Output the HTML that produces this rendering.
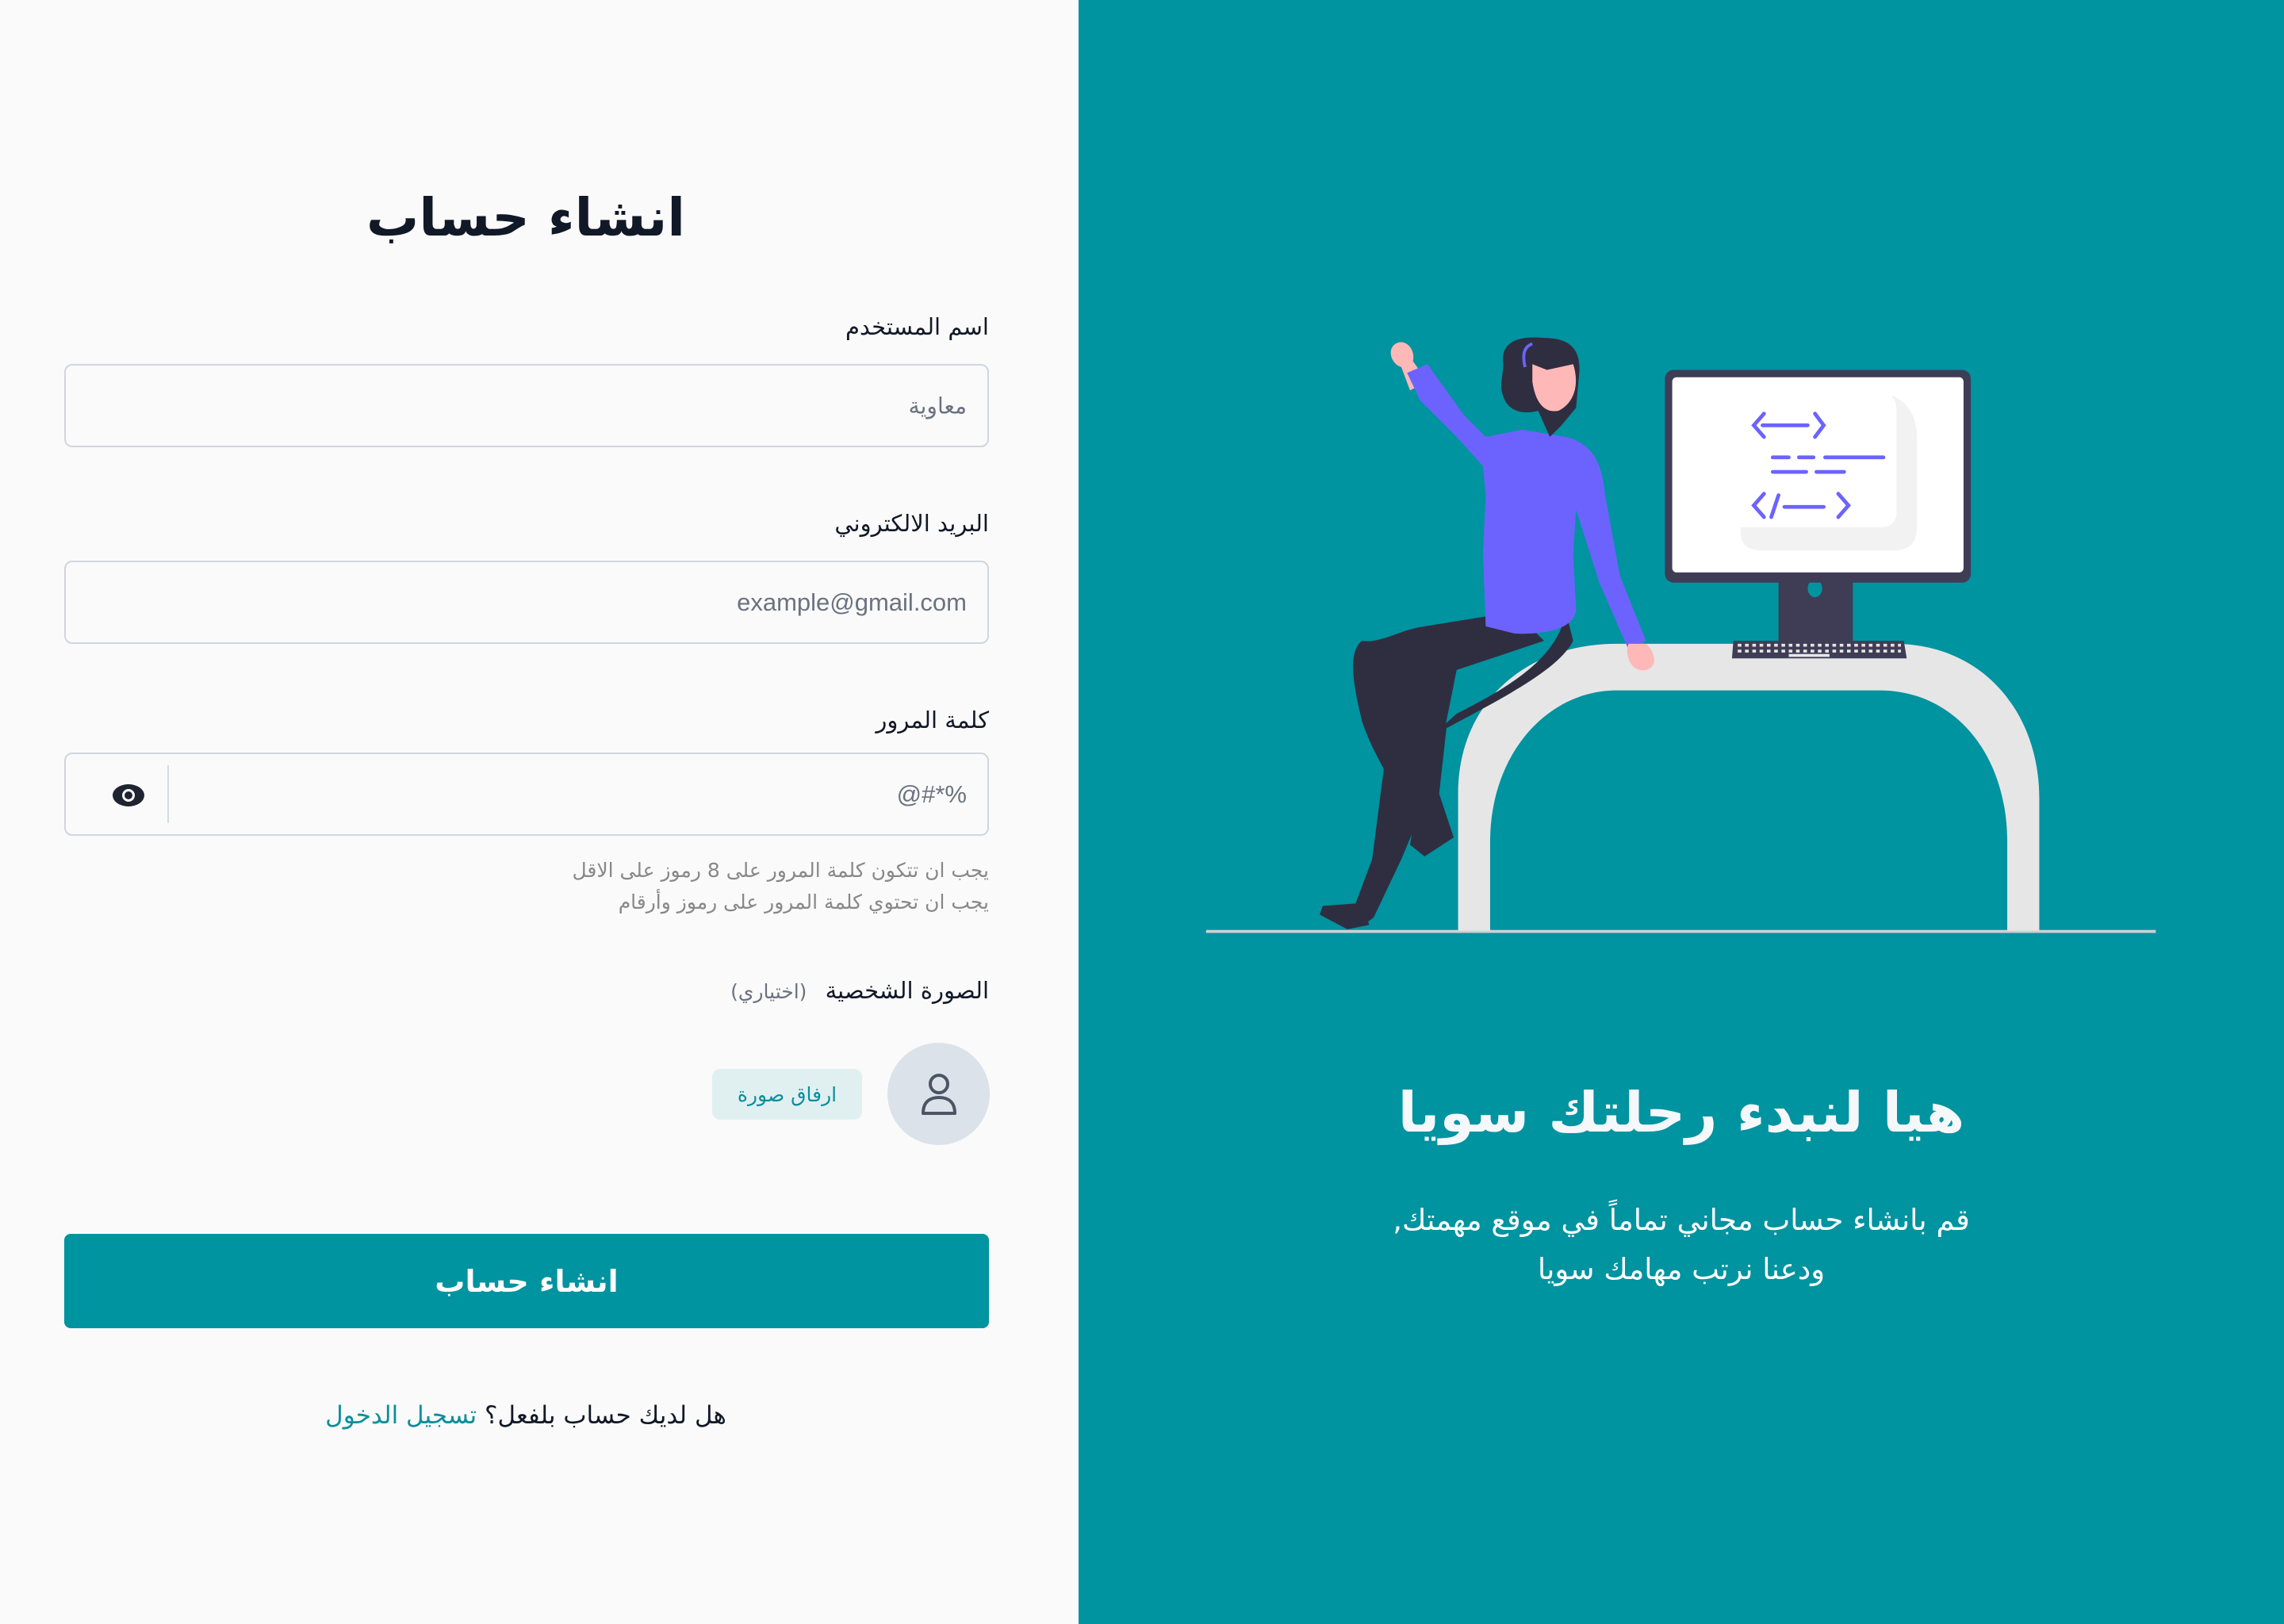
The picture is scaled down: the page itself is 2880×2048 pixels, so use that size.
<!DOCTYPE html>
<html><head><meta charset="utf-8"><style>
*{margin:0;padding:0;box-sizing:border-box}
body{width:2880px;height:2048px;position:relative;overflow:hidden;background:#fafafa;font-family:"DejaVu Sans","Liberation Sans",sans-serif}
.abs{position:absolute}
.left{left:0;top:0;width:1360px;height:2048px;background:#fafafa}
.right{left:1360px;top:0;width:1520px;height:2048px;background:#0093a0}
.r{direction:rtl;text-align:right;white-space:nowrap}
.lbl{right:1633px;font-size:29px;color:#111827}
.inp{left:81px;width:1166px;height:105px;border:2px solid #d1d5e0;border-radius:10px;background:#fafafa}
.ph{position:absolute;right:26px;top:50%;transform:translateY(-50%);font-size:31px;color:#6b7280;font-family:"Liberation Sans","DejaVu Sans",sans-serif}
</style></head><body>
<div class="abs left"></div>
<div class="abs right"></div>

<div class="abs" style="left:0;width:1326px;top:236px;text-align:center;font-size:66px;font-weight:bold;color:#111827;direction:rtl">انشاء حساب</div>

<div class="abs r lbl" style="top:395px">اسم المستخدم</div>
<div class="abs inp" style="top:459px"><span class="ph" style="font-family:'DejaVu Sans',sans-serif;font-size:28px">معاوية</span></div>

<div class="abs r lbl" style="top:643px">البريد الالكتروني</div>
<div class="abs inp" style="top:707px"><span class="ph">example@gmail.com</span></div>

<div class="abs r lbl" style="top:891px">كلمة المرور</div>
<div class="abs inp" style="top:949px"><span class="ph">@#*%</span>
<div style="position:absolute;left:128px;top:14px;width:2px;height:73px;background:#d6dae3"></div>
<svg style="position:absolute;left:58px;top:37px" width="42" height="30" viewBox="0 0 42 30"><ellipse cx="21" cy="15" rx="20" ry="14" fill="#1f2430"/><circle cx="21" cy="15" r="8" fill="#fff"/><circle cx="21" cy="15" r="5" fill="#1f2430"/></svg>
</div>

<div class="abs r" style="right:1633px;top:1078px;font-size:25px;color:#888;line-height:40px">يجب ان تتكون كلمة المرور على 8 رموز على الاقل<br>يجب ان تحتوي كلمة المرور على رموز وأرقام</div>

<div class="abs r" style="right:1633px;top:1232px;font-size:29px;color:#111827">الصورة الشخصية <span style="font-size:25px;color:#6b7280;margin-right:14px">(اختياري)</span></div>

<div class="abs" style="left:1119px;top:1315px;width:129px;height:129px;border-radius:50%;background:#dce2ea"></div>
<svg class="abs" style="left:1158px;top:1352px" width="52" height="56" viewBox="0 0 52 56"><circle cx="26" cy="15" r="11" fill="none" stroke="#4b5563" stroke-width="4"/><path d="M6 52 C6 38 14 32 26 32 C38 32 46 38 46 52 Z" fill="none" stroke="#4b5563" stroke-width="4" stroke-linejoin="round"/></svg>
<div class="abs" style="left:898px;top:1348px;width:189px;height:64px;border-radius:10px;background:#e0f0f1;color:#0a8f9b;font-size:25px;text-align:center;line-height:66px;direction:rtl">ارفاق صورة</div>

<div class="abs" style="left:81px;top:1556px;width:1166px;height:119px;border-radius:8px;background:#0093a0;color:#fff;font-size:38px;font-weight:bold;text-align:center;line-height:121px;direction:rtl">انشاء حساب</div>

<div class="abs" style="left:0;width:1326px;top:1767px;text-align:center;font-size:31px;color:#111827;direction:rtl">هل لديك حساب بلفعل؟ <span style="color:#0a8f9b">تسجيل الدخول</span></div>

<div class="abs" style="left:1360px;width:1520px;top:1362px;text-align:center;font-size:70px;font-weight:bold;color:#f5f8fb;direction:rtl">هيا لنبدء رحلتك سويا</div>
<div class="abs" style="left:1360px;width:1520px;top:1508px;text-align:center;font-size:37px;line-height:62px;color:#fff;direction:rtl">قم بانشاء حساب مجاني تماماً في موقع مهمتك,<br>ودعنا نرتب مهامك سويا</div>

<svg class="abs" style="left:0;top:0" width="2880" height="2048" viewBox="0 0 1568 1115">
<line x1="828" y1="639.5" x2="1480" y2="639.5" stroke="#d0d0d0" stroke-width="2"/>
<path d="M1001,639 L1001,545 C1001,482 1048,442 1110,442 L1300,442 C1362,442 1400,490 1400,548 L1400,639 L1378,639 L1378,578 C1378,518 1342,474 1290,474 L1110,474 C1062,474 1023,518 1023,578 L1023,639 Z" fill="#e6e6e6"/>
<rect x="1221" y="398" width="51" height="46" fill="#3f3d56"/>
<ellipse cx="1246" cy="404" rx="5" ry="6" fill="#0093a0"/>
<rect x="1143" y="254" width="210" height="146" rx="6" fill="#3f3d56"/>
<rect x="1148" y="259" width="200" height="134" rx="3" fill="#fff"/>
<path d="M1197,272 L1300,272 Q1316,280 1316,300 L1316,362 Q1316,378 1300,378 L1210,378 Q1196,378 1195,367 Z" fill="#f2f2f2"/>
<path d="M1195,270 L1292,270 Q1302,270 1302,282 L1302,352 Q1302,362 1290,362 L1195,362 Z" fill="#fff"/>
<g stroke="#6c63ff" stroke-width="2.6" stroke-linecap="round" fill="none">
<path d="M1211,284 L1204,292 L1211,300 M1246,284 L1252,292 L1246,300 M1210,292 L1241,292"/>
<path d="M1217,314 L1228,314 M1235,314 L1245,314 M1253,314 L1293,314 M1217,324 L1240,324 M1247,324 L1266,324"/>
<path d="M1211,339 L1204,347 L1211,355 M1221,340 L1216,355 M1225,348 L1252,348 M1262,339 L1269,347 L1262,355"/>
</g>
<path d="M1190,440 L1307,440 L1309,452 L1189,452 Z" fill="#3f3d56"/>
<g stroke="#e6e6e6" stroke-width="2" stroke-dasharray="2.5 2.5"><line x1="1193" y1="443" x2="1305" y2="443"/><line x1="1193" y1="447" x2="1305" y2="447"/></g>
<rect x="1228" y="449" width="28" height="2" fill="#e6e6e6"/>
<!-- woman -->
<path d="M1040,420 L978,430 C962,432 948,442 935,440 C925,448 929,470 935,495 C940,510 946,520 950,528 L942,590 L930,622 L935,636 L943,630 L962,590 L985,535 L1000,460 L1060,440 Z" fill="#2f2e41"/>
<path d="M935,620 L908,622 L906,628 L925,638 L940,635 Z" fill="#2f2e41"/>
<path d="M1075,420 C1070,450 1040,470 1000,490 L978,510 L972,555 L968,580 L978,588 L998,575 L988,545 L993,500 C1030,480 1070,460 1080,440 Z" fill="#2f2e41"/>
<path d="M958,236 C952,240 955,250 962,252 L968,268 L980,262 L970,248 C972,240 965,232 958,236 Z" fill="#ffb8b8"/>
<path d="M966,256 L980,250 L1005,285 L1020,300 L1045,295 L1075,300 C1095,305 1100,320 1102,340 L1112,395 L1130,440 L1118,446 L1098,400 L1082,350 L1080,380 L1082,418 C1082,430 1065,436 1040,435 L1020,430 L1018,380 L1020,340 L1018,320 L1000,300 L975,275 Z" fill="#6c63ff"/>
<path d="M1118,442 C1115,450 1120,462 1130,460 C1138,458 1137,448 1130,442 Z" fill="#ffb8b8"/>
<path d="M1032,250 C1030,236 1040,230 1060,232 C1078,232 1086,240 1084,258 L1082,280 L1072,292 L1064,300 L1056,282 C1045,285 1035,282 1032,272 C1029,265 1032,258 1032,250 Z" fill="#2f2e41"/>
<path d="M1052,250 L1062,254 L1080,250 C1084,262 1082,276 1070,282 C1060,284 1054,276 1052,262 Z" fill="#ffb8b8"/>
<path d="M1047,252 C1045,244 1046,238 1052,236" stroke="#6c63ff" stroke-width="2" fill="none"/>
</svg>
</body></html>
